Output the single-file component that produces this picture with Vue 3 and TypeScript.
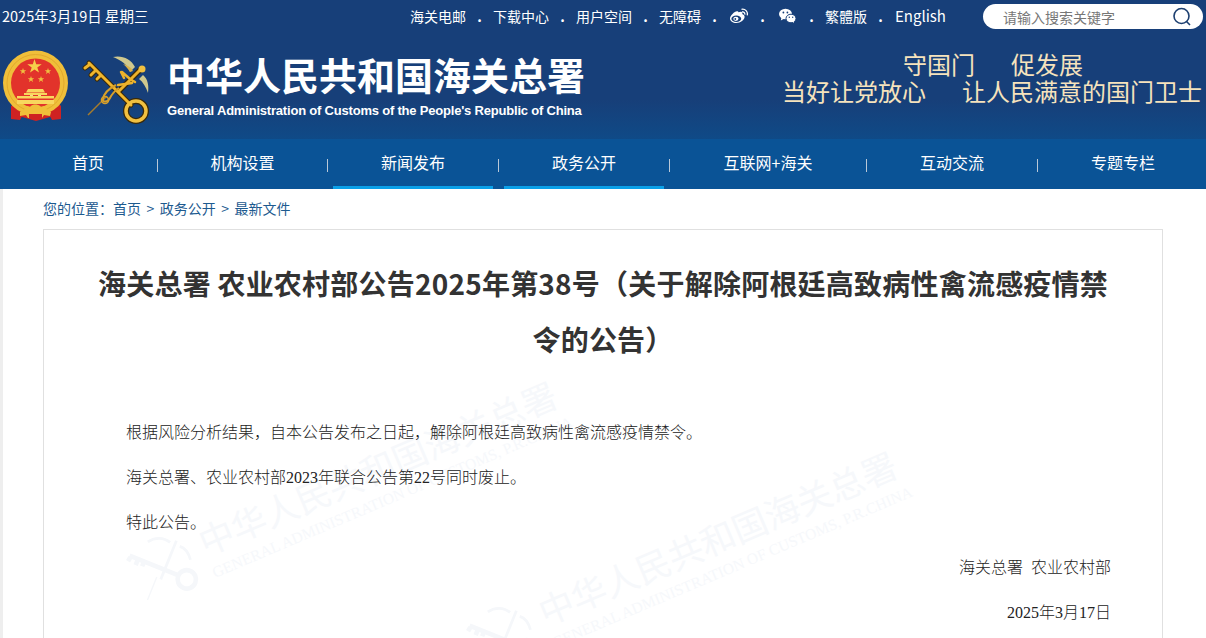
<template>
  <div class="page">
    <header class="head">
      <div class="top">
        <span class="date">2025年3月19日 星期三</span>
        <div class="top-links">
          <template v-for="(l, i) in topLinks" :key="i">
            <a v-if="l.text" class="top-link" :class="{ en: l.text === 'English' }">{{ l.text }}</a>
            <svg v-else-if="l.icon === 'weibo'" class="ic weibo" width="20" height="16" viewBox="0 0 20 16">
              <path fill="#fff" d="M9.500 4.300c1.500-.6 3.200-.7 3.700.1.300.5.200 1.100 0 1.700 1.300.4 2.400 1.200 2.400 2.700 0 3-3.900 6.200-8.300 6.200C3.900 15 1 13.200 1 10.500c0-2.700 4.500-7.300 7-7.300.9 0 1.500.4 1.500 1.100z"/>
              <ellipse cx="7.300" cy="10.700" rx="4.900" ry="3.200" fill="#173f79"/>
              <ellipse cx="6.900" cy="10.800" rx="2.600" ry="2.100" fill="#fff"/>
              <circle cx="6.300" cy="11" r=".9" fill="#173f79"/>
              <path fill="none" stroke="#fff" stroke-width="1.300" d="M12.500 1.300c3.600-.8 6.700 2.300 5.700 6M13 4c1.800-.4 3.100 1 2.800 2.700"/>
            </svg>
            <svg v-else class="ic wechat" width="20" height="16" viewBox="0 0 20 16">
              <ellipse cx="9.500" cy="6" rx="6.500" ry="5.200" fill="#fff"/>
              <path fill="#fff" d="M5.500 9.500l-.7 3 3.200-1.800z"/>
              <ellipse cx="15" cy="10.500" rx="5" ry="4.300" fill="#fff" stroke="#173f79"/>
              <path fill="#fff" d="M16.800 13.500l1.200 1.800-.1-2.600z"/>
              <circle cx="7.400" cy="4.500" r=".9" fill="#173f79"/>
              <circle cx="11.400" cy="4.500" r=".9" fill="#173f79"/>
              <circle cx="13.300" cy="9.200" r=".7" fill="#173f79"/>
              <circle cx="16.700" cy="9.200" r=".7" fill="#173f79"/>
            </svg>
            <span v-if="i < topLinks.length - 1" class="dot">.</span>
          </template>
        </div>
        <div class="search">
          <span class="search-hint">请输入搜索关键字</span>
          <svg width="20" height="20" viewBox="0 0 20 20" fill="none" stroke="#1c3f70" stroke-width="1.600">
            <circle cx="9.500" cy="9" r="7.500"/>
            <path d="M14.500 14.500l3.500 3.500"/>
          </svg>
        </div>
      </div>
      <div class="brand">
        <svg class="emblem" width="76" height="76" viewBox="0 0 76 76">
          <path fill="#cf2222" d="M11 58l8-4 38 0 4 4 0 13-11-2-14 4-14-4-11 2z"/>
          <circle cx="35.500" cy="35" r="32.500" fill="#f0bf3a"/>
          <circle cx="35.500" cy="35" r="28.500" fill="none" stroke="#e2a92c" stroke-width="1"/>
          <circle cx="35.500" cy="35" r="24.500" fill="#e2332b"/>
          <path fill="#f6d04a" d="M34.500 11l1.700 5.200h5.500l-4.400 3.200 1.700 5.200-4.500-3.200-4.500 3.200 1.700-5.200-4.400-3.200h5.500z"/>
          <path fill="#f0c040" d="M23 20l.8 2.300h2.400l-1.900 1.400.7 2.300-2-1.400-2 1.400.7-2.300-1.900-1.400h2.400zM48 20l.8 2.300h2.400l-1.900 1.400.7 2.300-2-1.400-2 1.400.7-2.300-1.900-1.400h2.400zM31 28l.8 2.300h2.400l-1.900 1.400.7 2.300-2-1.400-2 1.400.7-2.300-1.900-1.400h2.400zM41 28l.8 2.300h2.400l-1.900 1.400.7 2.300-2-1.400-2 1.400.7-2.300-1.900-1.400h2.400z"/>
          <path fill="#f8d75e" d="M28 41h15l2 3.500H26zM24 45h23v2H24zM17 48h37v2.500H17zM17 52h37v4H17z"/>
          <path fill="#f7e08a" d="M30 47h3v1h-3zM38 47h3v1h-3z"/>
          <path fill="#cf2222" d="M11 58c3 4 6 6 12 8l-3 6-9-1zM61 58c-3 4-6 6-12 8l3 6 9-1z"/>
          <path fill="#f0bf3a" d="M20 64c3-1 5-3 7-6 2 .8 3 1 4 0 1.500-2 7-2 9 0 1 1 2 .8 4 0 2 3 4 5 7 6l-1 4-6-1-2 3h-14l-2-3-6 1z"/>
          <path fill="#cf2222" d="M29 66h13v4H29z"/>
        </svg>
        <svg class="keys" width="76" height="76" viewBox="0 0 76 76" fill="none">
          <path fill="#cfc88e" d="M33 7c9-2 18 2 22 10l-5 5c-2-7-9-12-17-15z"/>
          <path fill="#d9b24a" d="M43 14c4 1 8 3 10 7l-3 1c-2-3-4-6-7-8z"/>
          <path fill="#cfc88e" d="M63 25c5 4 6 11 5 18-2-6-5-11-9-14z"/>
          <path stroke="#a87c2a" stroke-width="1.500" d="M8 65l19-19"/>
          <path stroke="#3a2908" stroke-width="5" stroke-linecap="round" d="M9 13l42 42M5 18l4-3M11 25l4-4M17 29l3-3"/>
          <path stroke="#3a2908" stroke-width="5.500" d="M62 18L38 42"/>
          <circle cx="56" cy="61" r="10" stroke="#3a2908" stroke-width="6"/>
          <path stroke="#f0b62c" stroke-width="3" stroke-linecap="round" d="M9 13l42 42M5 18l4-3M11 25l4-4M17 29l3-3"/>
          <path stroke="#edb22b" stroke-width="3" d="M62 18L38 42"/>
          <path stroke="#edb22b" stroke-width="2.500" stroke-linecap="round" d="M42 22l8 7 5 3M41 22l3 6M38 35l14-2"/>
          <path stroke="#d8a02a" stroke-width="2" d="M36 35c-6 3-12 8-13 14-1 4 5 3 7-1 2-4 6-8 9-10"/>
          <circle cx="25" cy="50" r="3.500" stroke="#d8a02a" stroke-width="1.600"/>
          <circle cx="56" cy="61" r="10" stroke="#f1c040" stroke-width="3.500"/>
          <circle cx="62" cy="19" r="3.500" fill="#f1c040"/>
        </svg>
        <div class="brand-names">
          <div class="cn-name">中华人民共和国海关总署</div>
          <div class="en-name">General Administration of Customs of the People's Republic of China</div>
        </div>
        <div class="slogan">
          <div class="slogan-1"><span>守国门</span><span>促发展</span></div>
          <div class="slogan-2"><span>当好让党放心</span><span>让人民满意的国门卫士</span></div>
        </div>
      </div>
    </header>

    <nav class="nav">
      <template v-for="(n, i) in navItems" :key="n.text">
        <a class="nav-item" :class="{ on: n.on }" :style="{ width: n.w + 'px' }">{{ n.text }}</a>
        <span v-if="i < navItems.length - 1" class="nav-sep"></span>
      </template>
    </nav>

    <div class="content">
      <div class="crumb">
        <span>您的位置：</span><a>首页</a><i>&gt;</i><a>政务公开</a><i>&gt;</i><a>最新文件</a>
      </div>

      <main class="card">
        <div class="marks" aria-hidden="true">
          <div v-for="m in marks" :key="m.x" class="mark" :style="{ left: m.x + 'px', top: m.y + 'px' }">
            <svg width="70" height="70" viewBox="0 0 76 76" fill="none" stroke="#f5f7fa" stroke-width="5">
              <path d="M9 13l42 42M5 18l4-3M11 25l4-4M17 29l3-3"/>
              <circle cx="56" cy="61" r="10"/>
              <path stroke-width="1.500" d="M8 65l19-19"/>
              <path stroke-width="3" d="M62 18L30 50"/>
              <path stroke-width="3" d="M33 7c9-2 18 2 22 10M63 25c5 4 6 11 5 18"/>
            </svg>
            <div class="mark-text">
              <div class="mark-cn">中华人民共和国海关总署</div>
              <div class="mark-en">GENERAL ADMINISTRATION OF CUSTOMS, P.R.CHINA</div>
            </div>
          </div>
        </div>
        <h1 class="title">海关总署 农业农村部公告2025年第38号（关于解除阿根廷高致病性禽流感疫情禁令的公告）</h1>
        <div class="body">
          <p>根据风险分析结果，自本公告发布之日起，解除阿根廷高致病性禽流感疫情禁令。</p>
          <p>海关总署、农业农村部2023年联合公告第22号同时废止。</p>
          <p>特此公告。</p>
          <p class="right">海关总署&nbsp; 农业农村部</p>
          <p class="right date-line">2025年3月17日</p>
        </div>
      </main>
    </div>
  </div>
</template>

<script setup lang="ts">
interface TopLink { text?: string; icon?: string }

const topLinks: TopLink[] = [
  { text: '海关电邮' },
  { text: '下载中心' },
  { text: '用户空间' },
  { text: '无障碍' },
  { icon: 'weibo' },
  { icon: 'wechat' },
  { text: '繁體版' },
  { text: 'English' },
]

const navItems = [
  { text: '首页', w: 128 },
  { text: '机构设置', w: 159 },
  { text: '新闻发布', w: 160, on: true },
  { text: '政务公开', w: 160, on: true },
  { text: '互联网+海关', w: 186 },
  { text: '互动交流', w: 160 },
  { text: '专题专栏', w: 160 },
]

const marks = [
  { x: 87, y: 315 },
  { x: 427, y: 385 },
]
</script>

<style>
html, body { background: #fff; overflow: hidden; }
</style>

<style scoped>
.page {
  width: 1206px;
  height: 638px;
  overflow: hidden;
  font-family: "Noto Sans CJK SC", "Liberation Sans", sans-serif;
}
.head {
  height: 139px;
  background: linear-gradient(#173f79 0, #173f79 100px, #0f4a87 139px);
  color: #fff;
}
.top {
  height: 31px;
  display: flex;
  align-items: center;
  font-size: 14px;
}
.date { margin-left: 2px; width: 408px; font-size: 14.500px; white-space: nowrap; }
.top-links { display: flex; align-items: center; width: 573px; }
.top-link { white-space: nowrap; }
.top-link.en { font-size: 15px; margin-left: 1px; }
.dot { width: 27px; text-align: center; font-weight: 700; line-height: 1; }
.ic { flex: none; }
.ic.weibo { margin-left: 1px; }
.ic.wechat { margin-right: 2px; }
.search {
  width: 220px;
  height: 25px;
  margin-top: 2px;
  background: #fff;
  border-radius: 13px;
  display: flex;
  align-items: center;
  justify-content: space-between;
  padding: 0 11px 0 20px;
  box-sizing: border-box;
}
.search-hint { color: #777; font-size: 14px; }
.brand { display: flex; align-items: flex-start; height: 108px; }
.emblem { margin-top: 17px; flex: none; }
.keys { margin: 19px 0 0 4px; flex: none; }
.brand-names { margin: 15px 0 0 11px; width: 440px; }
.cn-name {
  font-size: 38px;
  font-weight: 700;
  line-height: 56px;
  white-space: nowrap;
}
.en-name {
  font-family: "Liberation Sans", sans-serif;
  font-weight: 700;
  font-size: 13px;
  letter-spacing: -.2px;
  line-height: 18px;
  white-space: nowrap;
}
.slogan {
  margin: 19px 0 0 auto;
  color: #f6e3bd;
  font-size: 24px;
  line-height: 27px;
  white-space: nowrap;
  padding-right: 4px;
}
.slogan-1 { display: flex; gap: 36px; padding-left: 121px; }
.slogan-2 { display: flex; gap: 36px; }
.nav {
  height: 50px;
  background: #0a5396;
  display: flex;
  align-items: flex-start;
  padding-left: 24px;
}
.nav-item {
  height: 50px;
  line-height: 47px;
  color: #fff;
  text-align: center;
  font-size: 16px;
  box-sizing: border-box;
  flex: none;
}
.nav-item.on { border-bottom: 3px solid #0aa0e8; }
.nav-sep {
  width: 1px;
  height: 13px;
  margin: 20px 5px 0;
  background: #b9c8d8;
  flex: none;
}
.content { border-left: 3px solid #eee; }
.crumb {
  height: 38px;
  padding: 0 0 2px 40px;
  display: flex;
  align-items: center;
  font-size: 14px;
  color: #1d5a8f;
}
.crumb i { font-style: normal; margin: 0 5.500px; }
.card {
  position: relative;
  margin-left: 40px;
  width: 1120px;
  height: 600px;
  border: 1px solid #e0e0e0;
  box-sizing: border-box;
  overflow: hidden;
}
.marks { position: absolute; inset: 0; }
.mark {
  position: absolute;
  display: flex;
  align-items: center;
  gap: 8px;
  transform: rotate(-23deg);
  transform-origin: left center;
}
.mark-text { white-space: nowrap; }
.mark-cn { color: #f6f8fb; font-size: 35px; }
.mark-en { color: #f6f8fb; font-family: "Liberation Serif", serif; font-size: 15.500px; }
.title {
  position: relative;
  margin: 0;
  padding: 25px 50px 0;
  text-align: center;
  color: #333;
  font-size: 28px;
  letter-spacing: .22px;
  line-height: 56px;
  font-weight: 700;
}
.body {
  position: relative;
  margin-top: 43px;
  padding: 0 51px 0 82px;
  color: #222;
  font-family: "Liberation Serif", "Noto Sans CJK SC", serif;
  font-size: 16px;
  font-weight: 300;
}
.body p { margin: 0; height: 45px; line-height: 45px; }
.body .right { text-align: right; }
</style>
